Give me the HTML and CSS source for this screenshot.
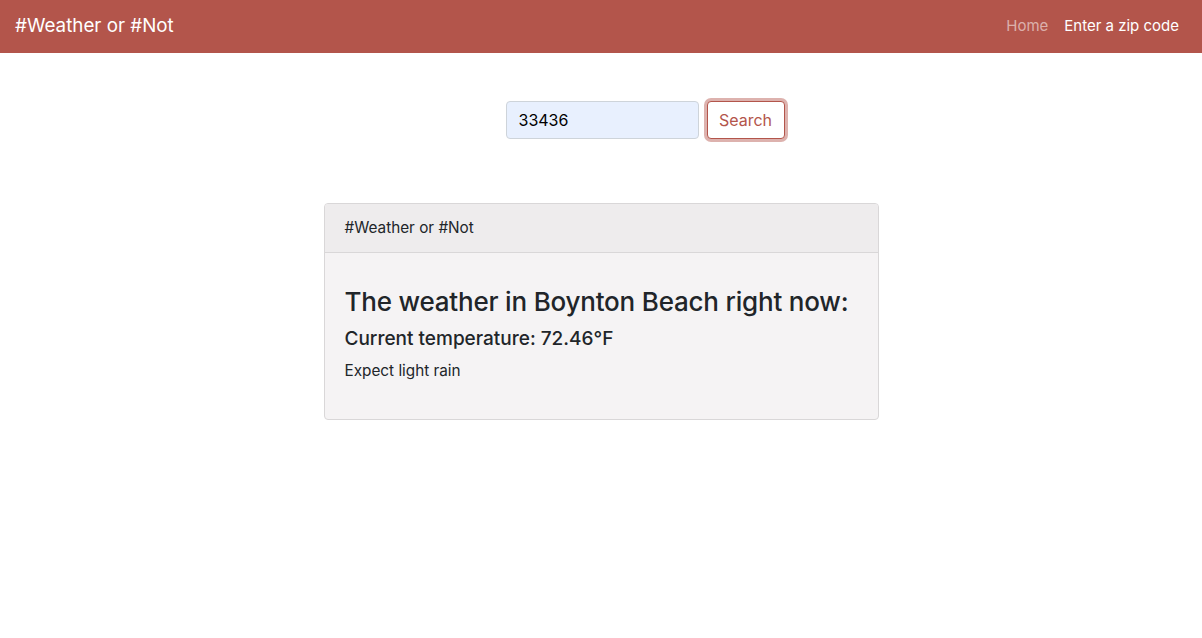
FILE: index.html
```html
<!DOCTYPE html>
<html lang="en">
<head>
<meta charset="utf-8">
<title>#Weather or #Not</title>
<link rel="stylesheet" href="styles.css">
</head>
<body>
<nav class="navbar">
  <a class="brand" href="#">#Weather or #Not</a>
  <ul class="nav">
    <li><a class="nav-link muted" href="#">Home</a></li>
    <li><a class="nav-link active" href="#">Enter a zip code</a></li>
  </ul>
</nav>
<main class="main">
  <form class="search">
    <input class="zip" type="text" value="33436">
    <button class="btn" type="button">Search</button>
  </form>
  <section class="card">
    <div class="card-header">#Weather or #Not</div>
    <div class="card-body">
      <h3 class="title">The weather in Boynton Beach right now:</h3>
      <h5 class="temp">Current temperature: 72.46°F</h5>
      <p class="desc">Expect light rain</p>
    </div>
  </section>
</main>
</body>
</html>
```
FILE: styles.css
```css
* { box-sizing: border-box; }
html, body { margin: 0; padding: 0; }
body {
  font-family: Inter, "Noto Sans", "Liberation Sans", sans-serif;
  font-size: 16px;
  line-height: 1.5;
  color: #212529;
  background: #fff;
}
.navbar {
  height: 53px;
  background: #b3554b;
  display: flex;
  align-items: center;
  justify-content: space-between;
  padding: 0 15px;
}
.brand {
  color: #fff;
  text-decoration: none;
  font-size: 18.8px;
  line-height: 1;
}
.nav {
  display: flex;
  list-style: none;
  margin: 0;
  padding: 0;
  gap: 0;
}
.nav-link {
  display: block;
  padding: 8px 8px;
  text-decoration: none;
  font-size: 15px;
}
.nav-link.muted { color: rgba(255,255,255,0.55); }
.nav-link.active { color: #fff; }
.main {
  display: flex;
  flex-direction: column;
  align-items: center;
  padding-top: 48px;
}
.search {
  display: flex;
  gap: 8px;
  padding-left: 88px;
  margin-bottom: 64px;
}
.zip {
  width: 193px;
  height: 38px;
  border: 1px solid #ced4da;
  border-radius: 4px;
  background: #e8f0fe;
  font-family: inherit;
  font-size: 16px;
  padding: 6px 12px;
  color: #000;
}
.btn {
  height: 38px;
  width: 78px;
  border: 1px solid #b3554b;
  background: #fff;
  color: #b3554b;
  border-radius: 4px;
  font-family: inherit;
  font-size: 16px;
  padding: 0;
  box-shadow: 0 0 0 3px rgba(179,85,75,0.45);
}
.card {
  width: 555px;
  border: 1px solid #d9d7d8;
  border-radius: 4px;
  overflow: hidden;
  background: #f5f3f4;
}
.card-header {
  background: #eeeced;
  border-bottom: 1px solid #d9d7d8;
  padding: 12px 20px;
  font-size: 15.3px;
  line-height: 24px;
}
.card-body {
  padding: 20px;
}
.title {
  margin: 12px 0 8px;
  font-size: 26px;
  font-weight: 500;
  letter-spacing: -0.2px;
  line-height: 33.6px;
  white-space: nowrap;
}
.temp {
  margin: 0 0 8px;
  font-size: 19px;
  font-weight: 500;
  line-height: 24px;
}
.desc {
  margin: 0 0 16px;
  font-size: 15.3px;
  line-height: 24px;
}
```
